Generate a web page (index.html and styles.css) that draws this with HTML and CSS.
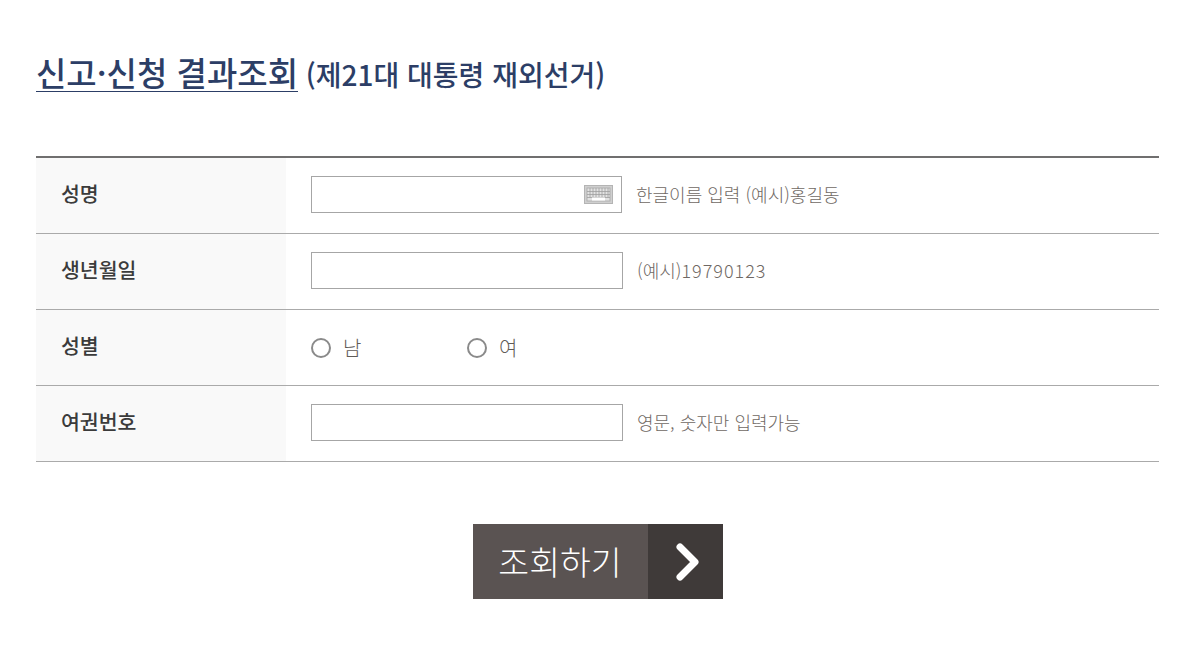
FILE: index.html
```html
<!DOCTYPE html>
<html lang="ko">

<head>
    <meta charset="UTF-8">
    <title>신고·신청 결과조회</title>
    <link rel="stylesheet" href="styles.css">
</head>

<body>
    <h1 class="title"><span class="title-main">신고·신청 결과조회</span> <span class="title-sub">(제21대 대통령 재외선거)</span></h1>

    <form class="search-form">
        <div class="row">
            <div class="label">성명</div>
            <div class="field">
                <div class="input-wrap">
                    <input type="text" class="text-input name-input">
                    <svg class="keyboard" width="29" height="19" viewBox="0 0 29 19">
                        <rect x="0.5" y="0.5" width="28" height="18" fill="#cfcfcf" stroke="#b4b4b4"/>
                        <rect x="3" y="3" width="23" height="13" fill="#e2e2e2" stroke="#a8a8a8" stroke-width="0.8"/>
                        <path d="M3 6.5H26M3 9.5H26M3 12.5H26M6 3V12.5M9 3V12.5M12 3V12.5M15 3V12.5M18 3V12.5M21 3V12.5M24 3V12.5" stroke="#a0a0a0" stroke-width="0.8" fill="none"/>
                        <rect x="8" y="12.5" width="13" height="3" fill="#fff"/>
                    </svg>
                </div>
                <span class="hint">한글이름 입력 (예시)홍길동</span>
            </div>
        </div>
        <div class="row">
            <div class="label">생년월일</div>
            <div class="field">
                <input type="text" class="text-input">
                <span class="hint">(예시)<span class="hint-num">19790123</span></span>
            </div>
        </div>
        <div class="row">
            <div class="label">성별</div>
            <div class="field">
                <label class="radio radio-male"><span class="radio-dot"></span>남</label>
                <label class="radio"><span class="radio-dot"></span>여</label>
            </div>
        </div>
        <div class="row">
            <div class="label">여권번호</div>
            <div class="field">
                <input type="text" class="text-input">
                <span class="hint">영문, 숫자만 입력가능</span>
            </div>
        </div>
    </form>

    <div class="actions">
        <button type="button" class="submit-btn">
            <span class="submit-text">조회하기</span>
            <span class="submit-arrow">
                <svg width="24" height="38" viewBox="0 0 24 38">
                    <path d="M4 4L19 19L4 34" fill="none" stroke="#fff" stroke-width="7" stroke-linecap="round" stroke-linejoin="round"/>
                </svg>
            </span>
        </button>
    </div>
</body>

</html>
```

FILE: styles.css
```css
body {
    margin: 0;
    padding: 0 42px 0 36px;
    background-color: #fff;
    font-family: "Noto Sans CJK KR", "Noto Sans", sans-serif;
    color: #333;
}

.title {
    margin: 0 0 49px;
    padding-top: 50px;
    height: 57px;
    font-size: 28px;
    line-height: 44px;
    font-weight: 500;
    color: #2c3e66;
    white-space: nowrap;
}

.title-main {
    display: inline-block;
    height: 41px;
    font-size: 33px;
    line-height: 44px;
    border-bottom: 1px solid #2c3e66;
}

.title-sub {
    font-size: 28px;
}

.search-form {
    border-top: 2px solid #706f6f;
}

.row {
    display: flex;
    height: 75px;
    border-bottom: 1px solid #aaa;
}

.label {
    width: 225px;
    padding-left: 25px;
    background-color: #f9f9f9;
    font-size: 20.5px;
    font-weight: 500;
    color: #3b3b3b;
    line-height: 71px;
}

.field {
    display: flex;
    align-items: center;
    padding: 0 0 2px 25px;
    flex: 1;
}

.input-wrap {
    position: relative;
    display: flex;
}

.text-input {
    width: 312px;
    height: 37px;
    box-sizing: border-box;
    border: 1px solid #a6a6a6;
    background: #fff;
    padding: 0 8px;
    margin: 0;
}

.name-input {
    width: 311px;
}

.keyboard {
    position: absolute;
    right: 9px;
    top: 9px;
}

.hint {
    margin: 0 0 2px 14px;
    font-size: 18px;
    font-weight: 300;
    color: #6f6863;
}

.hint-num {
    letter-spacing: 1px;
}

.radio {
    display: flex;
    align-items: center;
    margin-top: 2px;
    font-size: 20px;
    font-weight: 300;
    color: #5f5b57;
}

.radio-male {
    width: 156px;
}

.radio-dot {
    width: 20px;
    height: 20px;
    box-sizing: border-box;
    border: 2px solid #8a8a8a;
    border-radius: 50%;
    margin-right: 12px;
    background: #fff;
}

.actions {
    display: flex;
    justify-content: center;
    margin-top: 62px;
}

.submit-btn {
    display: flex;
    width: 250px;
    height: 75px;
    padding: 0;
    border: none;
    background-color: #5a5352;
    color: #fff;
    font-family: inherit;
    cursor: pointer;
}

.submit-text {
    width: 175px;
    font-size: 33.5px;
    font-weight: 300;
    line-height: 74px;
    text-align: center;
}

.submit-arrow {
    width: 75px;
    height: 75px;
    padding-left: 5px;
    box-sizing: border-box;
    display: flex;
    align-items: center;
    justify-content: center;
    background-color: #3f3a39;
}
```
